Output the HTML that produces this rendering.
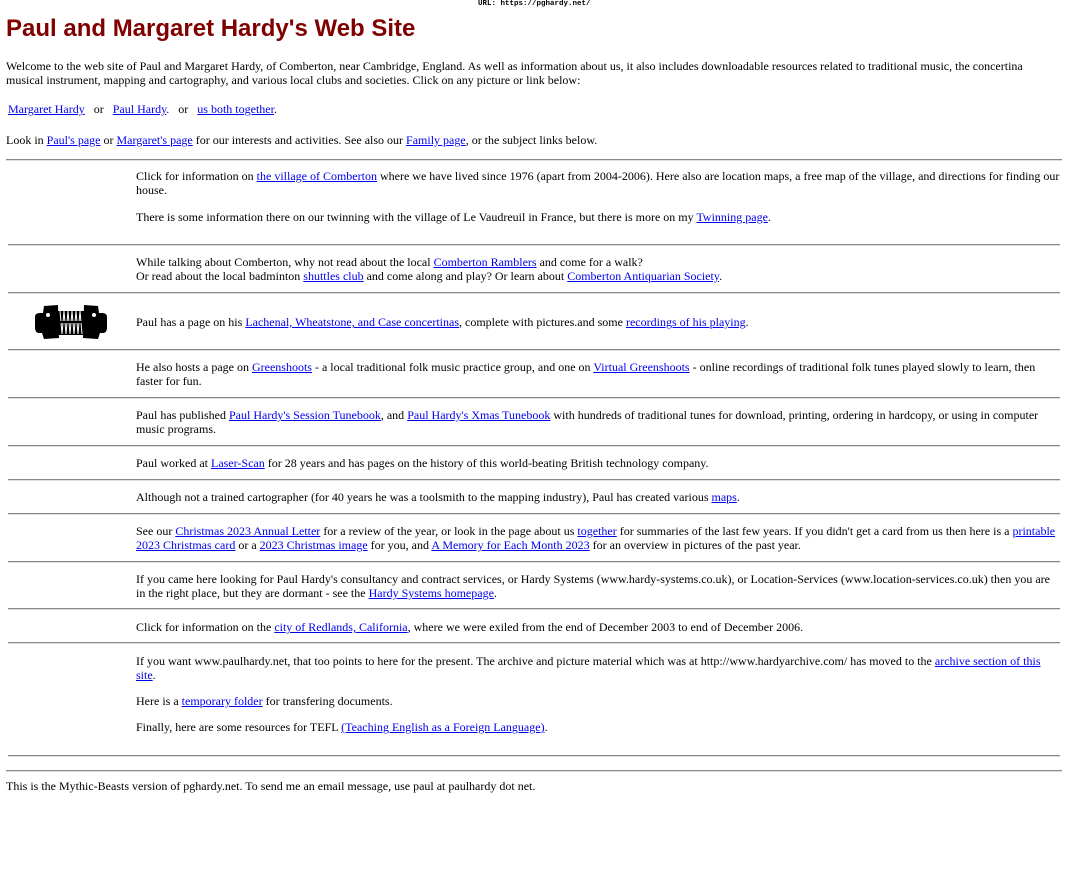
<!DOCTYPE html>
<html><head><meta charset="utf-8"><style>
body{margin:0;width:1068px;height:884px;background:#fff;position:relative;font-family:"Liberation Serif",serif;font-size:12px;color:#000;overflow:hidden}
.t{position:absolute;line-height:14px;white-space:nowrap}
.w{position:absolute;line-height:14px;left:136px;width:924px}
a{color:#0000ee;text-decoration:underline}
.hr{position:absolute;height:0;border-top:1px solid #888;border-bottom:1px solid #ddd}
</style></head><body>
<div class="t" style="left:478px;top:0;font-family:'Liberation Mono',monospace;font-size:7.5px;font-weight:bold;line-height:9px">URL: https://pghardy.net/</div>
<div class="t" style="left:6px;top:14px;font-family:'Liberation Sans',sans-serif;font-size:24px;font-weight:bold;color:#800000;line-height:30px">Paul and Margaret Hardy's Web Site</div>
<div class="w" style="left:6px;top:59px;width:1050px">Welcome to the web site of Paul and Margaret Hardy, of Comberton, near Cambridge, England. As well as information about us, it also includes downloadable resources related to traditional music, the concertina musical instrument, mapping and cartography, and various local clubs and societies. Click on any picture or link below:</div>
<div class="t" style="left:8px;top:102px"><a>Margaret Hardy</a> &nbsp;&nbsp;or &nbsp;&nbsp;<a>Paul Hardy</a>. &nbsp;&nbsp;or &nbsp;&nbsp;<a>us both together</a>.</div>
<div class="t" style="left:6px;top:133px">Look in <a>Paul's page</a> or <a>Margaret's page</a> for our interests and activities. See also our <a>Family page</a>, or the subject links below.</div>
<div class="hr" style="left:6px;width:1056px;top:159px"></div>
<div class="w" style="top:169px">Click for information on <a>the village of Comberton</a> where we have lived since 1976 (apart from 2004-2006). Here also are location maps, a free map of the village, and directions for finding our house.</div>
<div class="w" style="top:210px">There is some information there on our twinning with the village of Le Vaudreuil in France, but there is more on my <a>Twinning page</a>.</div>
<div class="hr" style="left:8px;width:1052px;top:244px"></div>
<div class="w" style="top:255px">While talking about Comberton, why not read about the local <a>Comberton Ramblers</a> and come for a walk?<br>Or read about the local badminton <a>shuttles club</a> and come along and play? Or learn about <a>Comberton Antiquarian Society</a>.</div>
<div class="hr" style="left:8px;width:1052px;top:292px"></div>
<svg style="position:absolute;left:34px;top:303px" width="74" height="38" viewBox="0 0 74 38">
<path d="M1 14 Q1 10 6 10 L9 10 L10 3 L24 2 L25 35 L10 36 L8 30 L5 30 Q1 30 1 24 Z" fill="#000"/>
<path d="M73 14 Q73 10 68 10 L65 10 L64 3 L50 2 L49 35 L64 36 L66 30 L69 30 Q73 30 73 24 Z" fill="#000"/>
<circle cx="14" cy="12" r="2" fill="#fff"/><circle cx="60" cy="12" r="2" fill="#fff"/>
<rect x="24" y="8" width="26" height="24" fill="#000"/>
<path d="M26 8 L28 31 L30 8 L32 31 L34 8 L36 31 L38 8 L40 31 L42 8 L44 31 L46 8 L48 31" stroke="#fff" stroke-width="1" fill="none"/>
<line x1="24" y1="19" x2="50" y2="19" stroke="#000" stroke-width="2"/>
</svg>
<div class="w" style="top:315px">Paul has a page on his <a>Lachenal, Wheatstone, and Case concertinas</a>, complete with pictures.and some <a>recordings of his playing</a>.</div>
<div class="hr" style="left:8px;width:1052px;top:349px"></div>
<div class="w" style="top:360px">He also hosts a page on <a>Greenshoots</a> - a local traditional folk music practice group, and one on <a>Virtual Greenshoots</a> - online recordings of traditional folk tunes played slowly to learn, then faster for fun.</div>
<div class="hr" style="left:8px;width:1052px;top:397px"></div>
<div class="w" style="top:408px">Paul has published <a>Paul Hardy's Session Tunebook</a>, and <a>Paul Hardy's Xmas Tunebook</a> with hundreds of traditional tunes for download, printing, ordering in hardcopy, or using in computer music programs.</div>
<div class="hr" style="left:8px;width:1052px;top:445px"></div>
<div class="w" style="top:456px">Paul worked at <a>Laser-Scan</a> for 28 years and has pages on the history of this world-beating British technology company.</div>
<div class="hr" style="left:8px;width:1052px;top:479px"></div>
<div class="w" style="top:490px">Although not a trained cartographer (for 40 years he was a toolsmith to the mapping industry), Paul has created various <a>maps</a>.</div>
<div class="hr" style="left:8px;width:1052px;top:513px"></div>
<div class="w" style="top:524px">See our <a>Christmas 2023 Annual Letter</a> for a review of the year, or look in the page about us <a>together</a> for summaries of the last few years. If you didn't get a card from us then here is a <a>printable 2023 Christmas card</a> or a <a>2023 Christmas image</a> for you, and <a>A Memory for Each Month 2023</a> for an overview in pictures of the past year.</div>
<div class="hr" style="left:8px;width:1052px;top:561px"></div>
<div class="w" style="top:572px">If you came here looking for Paul Hardy's consultancy and contract services, or Hardy Systems (www.hardy-systems.co.uk), or Location-Services (www.location-services.co.uk) then you are in the right place, but they are dormant - see the <a>Hardy Systems homepage</a>.</div>
<div class="hr" style="left:8px;width:1052px;top:608px"></div>
<div class="w" style="top:620px">Click for information on the <a>city of Redlands, California</a>, where we were exiled from the end of December 2003 to end of December 2006.</div>
<div class="hr" style="left:8px;width:1052px;top:642px"></div>
<div class="w" style="top:654px">If you want www.paulhardy.net, that too points to here for the present. The archive and picture material which was at http://www.hardyarchive.com/ has moved to the <a>archive section of this site</a>.</div>
<div class="w" style="top:694px">Here is a <a>temporary folder</a> for transfering documents.</div>
<div class="w" style="top:720px">Finally, here are some resources for TEFL <a>(Teaching English as a Foreign Language)</a>.</div>
<div class="hr" style="left:8px;width:1052px;top:755px"></div>
<div class="hr" style="left:6px;width:1056px;top:770px"></div>
<div class="t" style="left:6px;top:779px">This is the Mythic-Beasts version of pghardy.net. To send me an email message, use paul at paulhardy dot net.</div>
</body></html>
